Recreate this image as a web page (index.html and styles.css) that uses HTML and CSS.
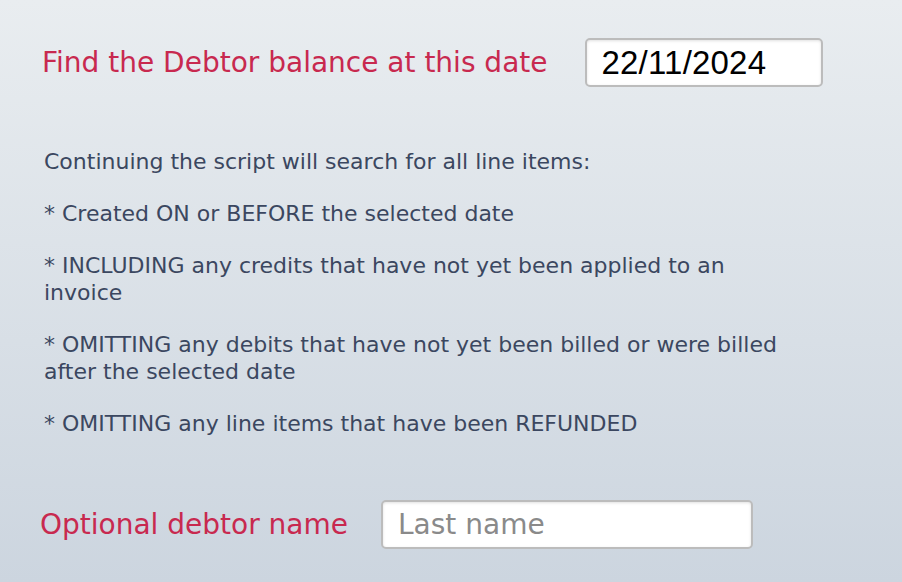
FILE: index.html
```html
<!DOCTYPE html>
<html>
<head>
<meta charset="utf-8">
<link rel="stylesheet" href="styles.css">
</head>
<body>
<div class="page">
  <div class="row row-date">
    <label class="label" for="date">Find the Debtor balance at this date</label>
    <input class="field field-date" id="date" type="text" value="22/11/2024">
  </div>
  <div class="info">
    <p>Continuing the script will search for all line items:</p>
    <p>* Created ON or BEFORE the selected date</p>
    <p>* INCLUDING any credits that have not yet been applied to an invoice</p>
    <p>* OMITTING any debits that have not yet been billed or were billed after the selected date</p>
    <p>* OMITTING any line items that have been REFUNDED</p>
  </div>
  <div class="row row-name">
    <label class="label" for="name">Optional debtor name</label>
    <input class="field field-name" id="name" type="text" placeholder="Last name">
  </div>
</div>
</body>
</html>
```
FILE: styles.css
```css
html, body {
  margin: 0;
  padding: 0;
  height: 100%;
}
body {
  background: linear-gradient(to bottom, #e9edf0 0%, #ccd5df 100%);
  font-family: "DejaVu Sans", Verdana, sans-serif;
}
.page {
  padding: 38px 0 0 42px;
}
.row {
  display: flex;
  align-items: center;
}
.label {
  color: #c8294f;
  font-size: 28px;
}
.field {
  box-sizing: border-box;
  height: 49px;
  border: 2px solid #bcbcbc;
  border-radius: 5px;
  background: #fff;
  box-shadow: inset 0 1px 3px rgba(0,0,0,0.12);
  font-family: "DejaVu Sans", Verdana, sans-serif;
  font-size: 28px;
  color: #000;
  padding: 0 15px;
  outline: none;
}
.field::placeholder {
  color: #8a8a8a;
}
.field-date {
  width: 238px;
  margin-left: 37px;
  font-family: "Liberation Sans", Arial, sans-serif;
  font-size: 33px;
  letter-spacing: 0.2px;
}
.info {
  margin-top: 61px;
  width: 752px;
  color: #3b4760;
  font-size: 22px;
  line-height: 27px;
}
.info p {
  margin: 0 0 25px 2px;
}
.info p:last-child {
  margin-bottom: 0;
}
.row-name {
  margin-top: 63px;
  margin-left: -2px;
}
.field-name {
  width: 372px;
  margin-left: 33px;
}
```
